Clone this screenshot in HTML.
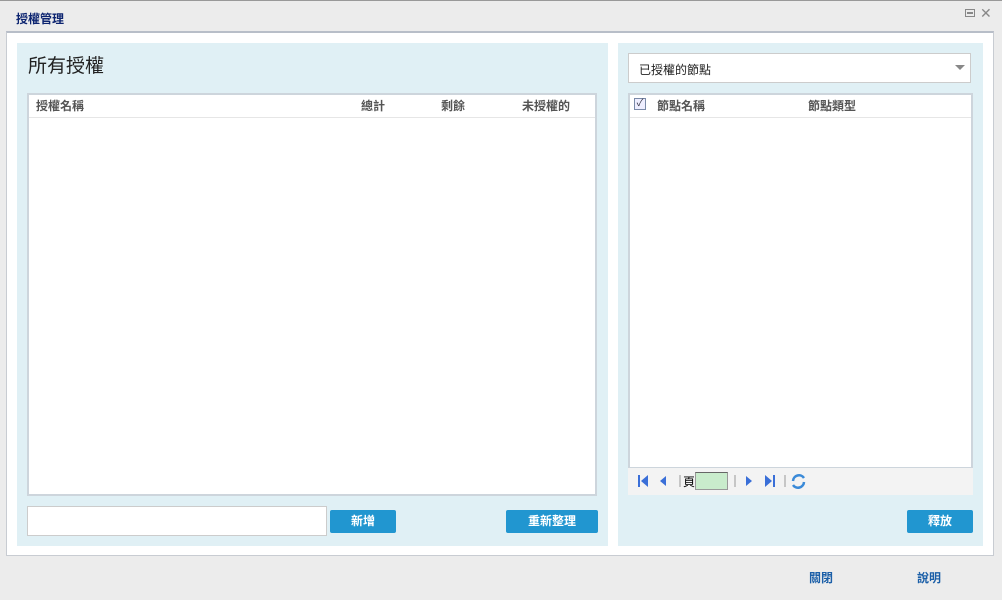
<!DOCTYPE html><html><head><meta charset="utf-8"><style>
*{box-sizing:border-box;margin:0;padding:0}
body{width:1002px;height:600px;background:#ececec;font-family:"Liberation Sans","Noto Sans CJK TC",sans-serif;position:relative;overflow:hidden}
.a{position:absolute}
.b{font-weight:bold;font-size:12px}
.btn{position:absolute;background:#2196d0;color:#fff;font-size:12px;font-weight:bold;text-align:center;line-height:23px;border-radius:2px;height:23px}
</style></head><body>
<div class="a" style="left:0;top:0;width:1002px;height:1px;background:#999"></div>
<div class="a b" style="left:16px;top:10px;color:#0c2470;font-size:12px">授權管理</div>
<div class="a" style="left:965px;top:9px;width:10px;height:8px;border:1px solid #888"><div style="margin:2px 1px;height:2px;border:1px solid #888"></div></div>
<div class="a" style="left:980px;top:5px;color:#888;font-size:14px">✕</div>
<div class="a" style="left:6px;top:31px;width:988px;height:525px;background:#fff;border:1px solid #c8ccd2;border-top:2px solid #b8bec8"></div>
<div class="a" style="left:17px;top:43px;width:591px;height:503px;background:#e0f0f5"></div>
<div class="a" style="left:28px;top:51px;font-size:19px;color:#222">所有授權</div>
<div class="a" style="left:27px;top:93px;width:570px;height:403px;background:#fff;border:2px solid #cdd5dc"></div>
<div class="a" style="left:29px;top:95px;width:566px;height:23px;border-bottom:1px solid #e6e6e6"></div>
<div class="a b" style="left:36px;top:97px;color:#555">授權名稱</div>
<div class="a b" style="left:361px;top:97px;color:#555">總計</div>
<div class="a b" style="left:441px;top:97px;color:#555">剩餘</div>
<div class="a b" style="left:522px;top:97px;color:#555">未授權的</div>
<div class="a" style="left:27px;top:506px;width:300px;height:30px;background:#fff;border:1px solid #ccc"></div>
<div class="btn" style="left:330px;top:510px;width:66px">新增</div>
<div class="btn" style="left:506px;top:510px;width:92px">重新整理</div>
<div class="a" style="left:618px;top:43px;width:365px;height:503px;background:#e0f0f5"></div>
<div class="a" style="left:628px;top:53px;width:343px;height:30px;background:#fff;border:1px solid #ccc;font-size:12px;padding:7px 10px;color:#222">已授權的節點</div>
<div class="a" style="left:955px;top:65px;border:5px solid transparent;border-top:5px solid #888"></div>
<div class="a" style="left:628px;top:93px;width:345px;height:376px;background:#fff;border:2px solid #cdd5dc"></div>
<div class="a" style="left:630px;top:95px;width:341px;height:23px;border-bottom:1px solid #e6e6e6"></div>
<div class="a" style="left:634px;top:98px;width:12px;height:12px;border:1px solid #7a8aa8;background:#eef;font-size:10px;line-height:10px;text-align:center;color:#334">✓</div>
<div class="a b" style="left:657px;top:97px;color:#555">節點名稱</div>
<div class="a b" style="left:808px;top:97px;color:#555">節點類型</div>
<div class="a" style="left:628px;top:468px;width:345px;height:27px;background:#f3f3f3"></div>
<svg class="a" style="left:636px;top:473px" width="172" height="16">
<g fill="#3a6fd8"><rect x="2" y="2" width="2" height="12"/><path d="M12 2 L5 8 L12 14Z"/><path d="M30 3 L24 8 L30 13Z"/><path d="M110 3 L116 8 L110 13Z"/><path d="M129 2 L136 8 L129 14Z"/><rect x="137" y="2" width="2" height="12"/></g>
<g stroke="#999"><line x1="44" y1="2" x2="44" y2="14"/><line x1="99" y1="2" x2="99" y2="14"/><line x1="149" y1="2" x2="149" y2="14"/></g>
<path d="M157 8 a6 6 0 0 1 11 -3 M168 9 a6 6 0 0 1 -11 3" stroke="#3a8ad8" stroke-width="2.5" fill="none"/>
</svg>
<div class="a" style="left:683px;top:473px;font-size:12px;color:#000">頁</div>
<div class="a" style="left:695px;top:472px;width:33px;height:18px;background:#c9eccc;border:1px solid #999;border-top-color:#666"></div>
<div class="btn" style="left:907px;top:510px;width:66px">釋放</div>
<div class="a b" style="left:809px;top:569px;color:#1b5fa8">關閉</div>
<div class="a b" style="left:917px;top:569px;color:#1b5fa8">說明</div>
</body></html>
